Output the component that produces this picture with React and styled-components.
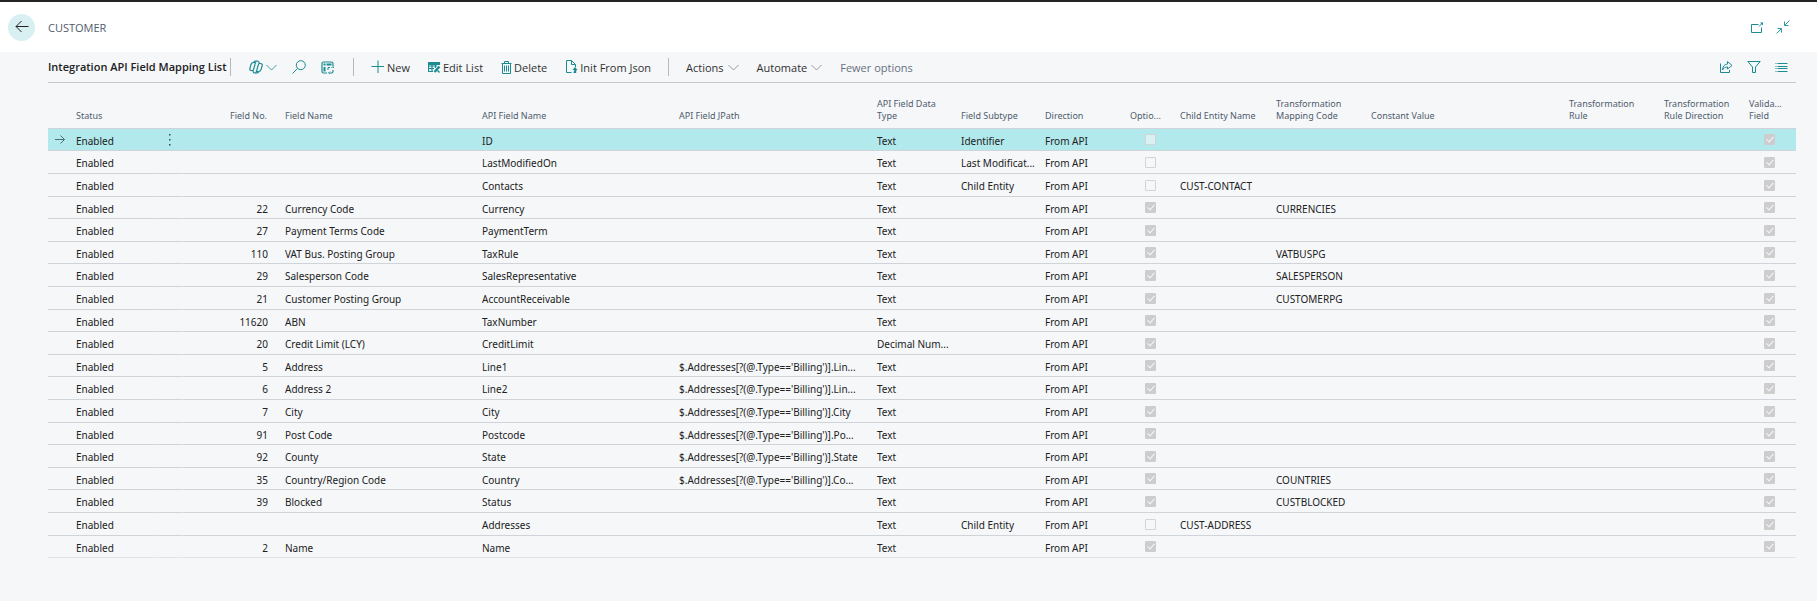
import React from "react";
import styled, { createGlobalStyle } from "styled-components";

const GlobalStyle = createGlobalStyle`
  *, *::before, *::after { box-sizing: border-box; }
  body {
    margin: 0;
    background: #f5f7f9;
    color: #212121;
    font-family: "Noto Sans", "Open Sans", sans-serif;
    font-size: 10px;
  }
`;

const TEAL = "#1a8c92";
const BAR_FONT = '"Open Sans", "Noto Sans", sans-serif';

const Page = styled.div`
  min-height: 100vh;
  border-top: 2px solid #252423;
`;

const Header = styled.header`
  display: flex;
  align-items: center;
  height: 50px;
  padding: 0 27px 0 8px;
  background: #fff;
`;

const BackButton = styled.button`
  display: flex;
  align-items: center;
  justify-content: center;
  width: 27px;
  height: 27px;
  padding: 0;
  border: 0;
  border-radius: 50%;
  background: #d8f0f2;
  color: #212121;
`;

const Crumb = styled.div`
  flex: 1;
  padding: 2px 0 0 13px;
  color: #505c6d;
  font-family: ${BAR_FONT};
  font-size: 11px;
  line-height: 16px;
`;

const IconGroup = styled.div`
  display: flex;
  align-items: center;
  gap: ${(p) => p.$gap}px;
`;

const IconButton = styled.button`
  display: flex;
  align-items: center;
  gap: 3px;
  height: 20px;
  padding: 0;
  border: 0;
  background: none;
  color: ${TEAL};
`;

const Main = styled.main`
  padding: 0 21px 40px 48px;
`;

const Toolbar = styled.div`
  display: flex;
  align-items: center;
  height: 31px;
  border-bottom: 1px solid #c6c8cc;
`;

const Title = styled.h1`
  margin: 0;
  width: 182px;
  font-family: ${BAR_FONT};
  font-size: 11px;
  font-weight: 600;
  line-height: 16px;
  white-space: nowrap;
`;

const Divider = styled.span`
  width: 1px;
  height: 18px;
  background: #b4b8c0;
`;

const Tools = styled.div`
  display: flex;
  align-items: center;
  gap: ${(p) => p.$gap}px;
  padding: 0 ${(p) => p.$right}px 0 ${(p) => p.$left}px;
`;

const Command = styled.button`
  display: flex;
  align-items: center;
  gap: ${(p) => p.$gap || 2}px;
  height: 20px;
  padding: 0;
  border: 0;
  background: none;
  color: ${(p) => (p.$quiet ? "#68707f" : "#323130")};
  font-family: ${BAR_FONT};
  font-size: 11px;
  white-space: nowrap;
  svg { color: ${(p) => (p.$menu ? "#7d8590" : TEAL)}; }
`;

const Spacer = styled.div`
  flex: 1;
`;

const Grid = styled.table`
  width: 100%;
  table-layout: fixed;
  border-collapse: separate;
  border-spacing: 0;
`;

const HeadCell = styled.th`
  height: 46px;
  padding: 0 ${(p) => (p.$right ? 15 : p.$narrow ? 12 : 3)}px 6px 3px;
  border-bottom: 1px solid #d0d3d8;
  color: #505c6d;
  font-size: 9px;
  font-weight: 400;
  line-height: 12px;
  text-align: ${(p) => (p.$right ? "right" : "left")};
  vertical-align: bottom;
  white-space: nowrap;
`;

const HeadLine = styled.span`
  display: block;
`;

const Row = styled.tr`
  height: 23px;
  background: ${(p) => (p.$selected ? "#b2e9ec" : "transparent")};
  &:nth-child(5n + 1), &:nth-child(5n + 4) { height: 22px; }
  &:last-child td { border-bottom-color: #e1e3e7; }
`;

const Cell = styled.td`
  padding: 2px ${(p) => (p.$right ? 14 : 3)}px 0 3px;
  border-bottom: 1px solid #d0d3d8;
  overflow: hidden;
  text-overflow: ellipsis;
  white-space: nowrap;
  line-height: 14px;
  text-align: ${(p) => (p.$right ? "right" : "left")};
`;

const MarkerCell = styled(Cell)`
  padding: 0 0 0 6px;
  svg { display: block; color: #4b6f73; }
`;

const MenuCell = styled(Cell)`
  padding: 0;
  border-left: 1px solid transparent;
  border-right: 1px solid transparent;
`;

const MenuButton = styled.button`
  display: block;
  margin: 0 auto;
  padding: 0;
  border: 0;
  background: none;
  color: #3c4a4c;
  svg { display: block; }
`;

const CheckCell = styled(Cell)`
  padding: 0 0 0 18px;
`;

const Check = styled.input.attrs({ type: "checkbox", disabled: true })`
  appearance: none;
  display: block;
  position: relative;
  width: 11px;
  height: 11px;
  margin: 0;
  border: 1px solid #d3d4d6;
  border-radius: 1px;
  background: rgba(245, 247, 249, 0.6);
  &:checked { background: #cdcdce; border-color: #cdcdce; }
  &:checked::after {
    content: "";
    position: absolute;
    left: 3px;
    top: 0;
    width: 4px;
    height: 7px;
    border: solid #f6f7f9;
    border-width: 0 1px 1px 0;
    transform: rotate(42deg);
  }
`;

function Svg({ w = 14, h = 14, sw = 1, children }) {
  return (
    <svg width={w} height={h} viewBox={`0 0 ${w} ${h}`} fill="none" stroke="currentColor" strokeWidth={sw} aria-hidden="true">
      {children}
    </svg>
  );
}

const ArrowLeft = () => (
  <Svg w={14} h={14}><path d="M13.5 6.5H1M6.5 1L1 6.5L6.5 12" /></Svg>
);
const ArrowRight = () => (
  <Svg w={12} h={9}><path d="M1 4.500H10.500M6.500 .5L10.500 4.500L6.500 8.500" /></Svg>
);
const Dots = () => (
  <Svg w={4} h={12}><path fill="currentColor" stroke="none" d="M1 0h1.500v1.500H1zM1 5h1.500v1.500H1zM1 10h1.500v1.500H1z" /></Svg>
);
const Chevron = () => (
  <Svg w={11} h={7}><path d="M.5 1L5.500 6L10.500 1" strokeWidth=".8" /></Svg>
);
const Popout = () => (
  <Svg><path d="M8.500 4.500H1.500V12.500H11.500V7.500M9 6.500L12.500 3" /><path d="M10 2.500H13V5.500z" fill="currentColor" stroke="none" /></Svg>
);
const Collapse = () => (
  <Svg><path d="M13.500 .5L9 5M8.500 1.500V5.500H12.500M.5 13.500L5 9M1.500 8.500H5.500V12.500" strokeWidth=".9" /></Svg>
);
const Copilot = () => (
  <Svg sw={1.2}>
    <path d="M4.500 2.500C5 1.200 5.500 1 6.500 1H8.500C9.500 1 9.800 1.500 10 2.500L10.300 3.500H11.500C13 3.500 13.500 4.500 13.200 5.600L12 9.600C11.600 11 11 11.500 9.800 11.500" />
    <path d="M9.800 11.500C9.300 12.700 8.700 13 7.700 13H5.700C4.700 13 4.400 12.500 4.100 11.500L3.800 10.500H2.500C1 10.500 .6 9.500 .9 8.400L2 4.500C2.400 3 3.200 2.500 4.500 2.500H7" />
    <path d="M7.500 1.200C6.800 1.600 6.600 2.200 6.300 3.200L4.800 8.600C4.500 9.800 4.200 10.500 3.500 10.500M10.800 3.500C9.900 3.500 9.500 4.100 9.200 5.200L7.700 10.600C7.400 11.800 7.200 12.500 6.500 13M7 11.500H9.800" />
  </Svg>
);
const Search = () => (
  <Svg><circle cx="8.800" cy="5.200" r="4.500" /><path d="M5.600 8.400L.5 13.500" /></Svg>
);
const Personalise = () => (
  <Svg w={13} h={13} sw={1.2}>
    <path d="M6 12H2.500C1.500 12 1 11.500 1 10.500V2.500C1 1.500 1.500 1 2.500 1H10.500C11.500 1 12 1.500 12 2.500V5M12 9V10.500C12 11.500 11.500 12 10.500 12H9" />
    <path d="M3.500 2.500V4.500M5.500 3.500H10.500M3.500 6V10.500" strokeWidth="2" />
    <path d="M7 9V6.500H9M9 10.500L7.500 12L9 13M10.500 7L12 5.500L13 7" strokeWidth="1" />
  </Svg>
);
const Plus = () => (
  <Svg><path d="M7 .5V13M.5 6.500H13" /></Svg>
);
const EditList = () => (
  <Svg w={13} h={13}>
    <path d="M.5 1.500H11.500V4M.5 1V10.500H5M.5 7.500H6M4 4V10.500M7.500 4V7M.5 5H9" strokeWidth="1.200" />
    <path d="M0 1H12V4H0z" fill="currentColor" stroke="none" />
    <path d="M6.500 11L11.500 5.500" strokeWidth="2.400" />
    <path d="M9.500 9.500L11.500 11.500" strokeWidth="1.500" />
  </Svg>
);
const Trash = () => (
  <Svg w={11} h={13}>
    <path d="M.5 2.500H10.500M3.500 2.500V.5H7.500V2.500M1.500 2.500V12.500H9.500V2.500M3.500 4.500V10.500M5.500 4.500V10.500M7.500 4.500V10.500" />
  </Svg>
);
const Init = () => (
  <Svg w={13} h={14}>
    <path d="M6.500 12.500H1.500V.5H6.500L10.500 4.500V7M6.500 .5V4.500H10.500" />
    <path d="M7.500 10L10 7L12.500 10L11.200 10.500V13H8.500V11.500H9.200V10z" fill="currentColor" stroke="none" />
  </Svg>
);
const Share = () => (
  <Svg>
    <path d="M1.500 3.500V12.500H10.500V10" />
    <path d="M8.500 1.500L13 5.500L8.500 9V7C6 7 4.500 8 3.500 10C3.700 6.500 5.500 4.200 8.500 4z" />
  </Svg>
);
const Filter = () => (
  <Svg><path d="M.8 1.500H13.200L8.500 7V12.500H5.500V7z" /></Svg>
);
const List = () => (
  <Svg w={13} h={11}>
    <path d="M2.500 1.500H12.500M2.500 4.500H12.500M2.500 6.500H12.500M2.500 9.500H12.500M.5 1.500H1.500M.5 4.500H1.500M.5 6.500H1.500M.5 9.500H1.500" />
  </Svg>
);

const COLUMNS = [
  { width: 25, label: "" },
  { width: 84, label: "Status" },
  { width: 26, label: "" },
  { width: 99, label: "Field No.", right: true },
  { width: 197, label: "Field Name" },
  { width: 197, label: "API Field Name" },
  { width: 198, label: "API Field JPath" },
  { width: 84, label: "API Field Data\nType" },
  { width: 84, label: "Field Subtype" },
  { width: 85, label: "Direction" },
  { width: 50, label: "Optio...", narrow: true },
  { width: 96, label: "Child Entity Name" },
  { width: 95, label: "Transformation\nMapping Code" },
  { width: 198, label: "Constant Value" },
  { width: 95, label: "Transformation\nRule" },
  { width: 85, label: "Transformation\nRule Direction" },
  { width: 50, label: "Valida...\nField", narrow: true },
];

const row = (no, name, api, extra = {}) => ({ no, name, api, type: "Text", optional: true, ...extra });
const billing = (part) => ({ path: `$.Addresses[?(@.Type=='Billing')].${part}` });

const ROWS = [
  row("", "", "ID", { subtype: "Identifier", optional: false }),
  row("", "", "LastModifiedOn", { subtype: "Last Modificat...", optional: false }),
  row("", "", "Contacts", { subtype: "Child Entity", optional: false, child: "CUST-CONTACT" }),
  row("22", "Currency Code", "Currency", { mapping: "CURRENCIES" }),
  row("27", "Payment Terms Code", "PaymentTerm"),
  row("110", "VAT Bus. Posting Group", "TaxRule", { mapping: "VATBUSPG" }),
  row("29", "Salesperson Code", "SalesRepresentative", { mapping: "SALESPERSON" }),
  row("21", "Customer Posting Group", "AccountReceivable", { mapping: "CUSTOMERPG" }),
  row("11620", "ABN", "TaxNumber"),
  row("20", "Credit Limit (LCY)", "CreditLimit", { type: "Decimal Num..." }),
  row("5", "Address", "Line1", billing("Lin...")),
  row("6", "Address 2", "Line2", billing("Lin...")),
  row("7", "City", "City", billing("City")),
  row("91", "Post Code", "Postcode", billing("Po...")),
  row("92", "County", "State", billing("State")),
  row("35", "Country/Region Code", "Country", { ...billing("Co..."), mapping: "COUNTRIES" }),
  row("39", "Blocked", "Status", { mapping: "CUSTBLOCKED" }),
  row("", "", "Addresses", { subtype: "Child Entity", optional: false, child: "CUST-ADDRESS" }),
  row("2", "Name", "Name"),
];

function MappingRow({ item, selected }) {
  return (
    <Row $selected={selected}>
      <MarkerCell>{selected && <ArrowRight />}</MarkerCell>
      <Cell>Enabled</Cell>
      <MenuCell>
        {selected && <MenuButton aria-label="Show more options"><Dots /></MenuButton>}
      </MenuCell>
      <Cell $right>{item.no}</Cell>
      <Cell>{item.name}</Cell>
      <Cell>{item.api}</Cell>
      <Cell>{item.path}</Cell>
      <Cell>{item.type}</Cell>
      <Cell>{item.subtype}</Cell>
      <Cell>From API</Cell>
      <CheckCell><Check aria-label={`${item.api} optional`} defaultChecked={item.optional} /></CheckCell>
      <Cell>{item.child}</Cell>
      <Cell>{item.mapping}</Cell>
      <Cell />
      <Cell />
      <Cell />
      <CheckCell><Check aria-label={`${item.api} validate field`} defaultChecked /></CheckCell>
    </Row>
  );
}

export default function App() {
  return (
    <>
      <GlobalStyle />
      <Page>
        <Header>
          <BackButton aria-label="Back"><ArrowLeft /></BackButton>
          <Crumb>CUSTOMER</Crumb>
          <IconGroup $gap={12}>
            <IconButton aria-label="Open in new window"><Popout /></IconButton>
            <IconButton aria-label="Collapse"><Collapse /></IconButton>
          </IconGroup>
        </Header>
        <Main>
          <Toolbar>
            <Title>Integration API Field Mapping List</Title>
            <Divider />
            <Tools $gap={15} $left={18} $right={19}>
              <IconButton aria-label="Copilot"><Copilot /><Chevron /></IconButton>
              <IconButton aria-label="Search"><Search /></IconButton>
              <IconButton aria-label="Personalize"><Personalise /></IconButton>
            </Tools>
            <Divider />
            <Tools $gap={18} $left={17} $right={17}>
              <Command><Plus />New</Command>
              <Command><EditList />Edit List</Command>
              <Command><Trash />Delete</Command>
              <Command><Init />Init From Json</Command>
            </Tools>
            <Divider />
            <Tools $gap={18} $left={17} $right={0}>
              <Command $menu $gap={4}>Actions<Chevron /></Command>
              <Command $menu $gap={4}>Automate<Chevron /></Command>
              <Command $quiet>Fewer options</Command>
            </Tools>
            <Spacer />
            <Tools $gap={14} $left={0} $right={8}>
              <IconButton aria-label="Share"><Share /></IconButton>
              <IconButton aria-label="Filter"><Filter /></IconButton>
              <IconButton aria-label="List view"><List /></IconButton>
            </Tools>
          </Toolbar>
          <Grid>
            <colgroup>
              {COLUMNS.map((c, i) => <col key={i} width={c.width} />)}
            </colgroup>
            <thead>
              <tr>
                {COLUMNS.map((c, i) => (
                  <HeadCell key={i} scope="col" $right={c.right} $narrow={c.narrow}>
                    {c.label.split("\n").map((line) => <HeadLine key={line}>{line}</HeadLine>)}
                  </HeadCell>
                ))}
              </tr>
            </thead>
            <tbody>
              {ROWS.map((item, i) => <MappingRow key={item.api} item={item} selected={i === 0} />)}
            </tbody>
          </Grid>
        </Main>
      </Page>
    </>
  );
}
